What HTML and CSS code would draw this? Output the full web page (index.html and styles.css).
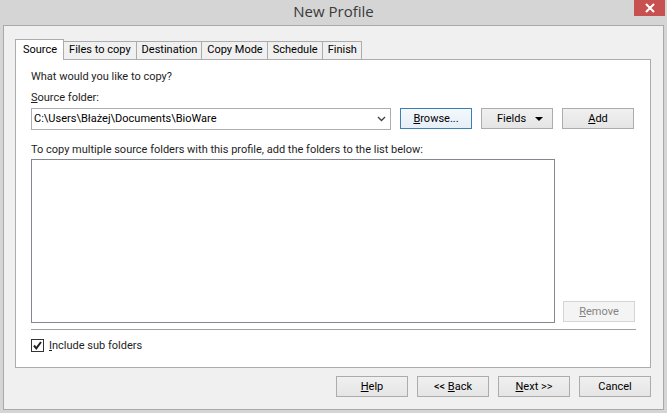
FILE: index.html
```html
<!DOCTYPE html>
<html lang="en">
<head>
    <meta charset="UTF-8">
    <title>New Profile</title>
    <link rel="stylesheet" href="styles.css">
</head>
<body>
    <div class="window">
        <div class="titlebar">
            <span class="title">New Profile</span>
            <div class="close">
                <svg width="12" height="10" viewBox="0 0 12 10"><path d="M2 1 L10 9 M10 1 L2 9" stroke="#fff" stroke-width="2"/></svg>
            </div>
        </div>

        <div class="client">
            <div class="tabs">
                <div class="tab active">Source</div>
                <div class="tab">Files to copy</div>
                <div class="tab">Destination</div>
                <div class="tab">Copy Mode</div>
                <div class="tab">Schedule</div>
                <div class="tab">Finish</div>
            </div>

            <div class="panel">
                <p class="question">What would you like to copy?</p>
                <p class="label"><u>S</u>ource folder:</p>

                <div class="source-row">
                    <div class="combo">
                        <span>C:\Users\Błażej\Documents\BioWare</span>
                        <svg class="chevron" width="9" height="6" viewBox="0 0 9 6"><path d="M1 1 L4.5 4.5 L8 1" fill="none" stroke="#444" stroke-width="1.4"/></svg>
                    </div>
                    <button class="btn default"><u>B</u>rowse...</button>
                    <button class="btn fields">Fields <span class="caret"></span></button>
                    <button class="btn"><u>A</u>dd</button>
                </div>

                <p class="label hint">To copy multiple source folders with this profile, add the folders to the list below:</p>

                <div class="list-row">
                    <div class="listbox"></div>
                    <button class="btn disabled"><u>R</u>emove</button>
                </div>

                <div class="separator"></div>

                <label class="check">
                    <span class="box">
                        <svg width="11" height="11" viewBox="0 0 11 11"><path d="M2 5.5 L4.3 8.3 L9 2" fill="none" stroke="#222" stroke-width="2"/></svg>
                    </span>
                    <span><u>I</u>nclude sub folders</span>
                </label>
            </div>

            <div class="footer">
                <button class="btn"><u>H</u>elp</button>
                <button class="btn">&lt;&lt; <u>B</u>ack</button>
                <button class="btn"><u>N</u>ext &gt;&gt;</button>
                <button class="btn">Cancel</button>
            </div>
        </div>
    </div>
</body>
</html>
```

FILE: styles.css
```css
* {
    margin: 0;
    padding: 0;
    box-sizing: border-box;
}

body {
    width: 667px;
    height: 413px;
    background: #d5d5d5;
    font-family: Roboto, "Open Sans", sans-serif;
    font-size: 11px;
    color: #000;
    overflow: hidden;
}

.window {
    display: flex;
    flex-direction: column;
    height: 413px;
}

.titlebar {
    height: 25px;
    position: relative;
    display: flex;
    justify-content: center;
    align-items: center;
}

.title {
    font-family: "Open Sans", sans-serif;
    font-size: 15px;
    color: #3a3a3a;
    margin-top: -2px;
}

.close {
    position: absolute;
    top: 0;
    right: 2px;
    width: 31px;
    height: 16px;
    background: #c75050;
    display: flex;
    justify-content: center;
    align-items: center;
}

.client {
    margin: 0 3px 3px 3px;
    height: 388px;
    border: 1px solid #a9a9a9;
    background: #f0f0f0;
    padding: 13px 12px 0 11px;
}

.tabs {
    display: flex;
    align-items: flex-end;
    height: 20px;
    position: relative;
    z-index: 1;
}

.tab {
    height: 18px;
    padding: 0 4px 0 5px;
    border: 1px solid #acacac;
    border-bottom: none;
    border-left: none;
    background: #f0f0f0;
    line-height: 16px;
}

.tab.active {
    height: 21px;
    margin-bottom: -1px;
    padding: 0 6px 0 7px;
    border-left: 1px solid #acacac;
    background: #fff;
    line-height: 19px;
}

.tab.active + .tab {
    padding: 0 5px;
}

.panel {
    height: 309px;
    background: #fff;
    border: 1px solid #acacac;
    padding: 9px 15px 0 15px;
}

.question {
    line-height: 16px;
    color: #1e1e1e;
}

.label {
    margin-top: 5px;
    line-height: 16px;
    color: #1e1e1e;
}

.source-row {
    display: flex;
    align-items: center;
    gap: 9px;
    margin-top: 2px;
}

.combo {
    width: 360px;
    height: 22px;
    border: 1px solid #abadb3;
    background: #fff;
    display: flex;
    align-items: center;
    justify-content: space-between;
    padding: 0 4px 0 2px;
    color: #000;
}

.chevron {
    margin-top: 1px;
}

.btn {
    width: 72px;
    height: 21px;
    border: 1px solid #acacac;
    background: linear-gradient(#f0f0f0, #e5e5e5);
    font-family: inherit;
    font-size: 11px;
    color: #000;
    line-height: 17px;
}

.btn.default {
    border-color: #3c7fb1;
    background: linear-gradient(#f4f8fc, #e6eef6);
}

.fields {
    display: flex;
    align-items: center;
    justify-content: center;
    gap: 9px;
    padding-left: 6px;
}

.caret {
    width: 0;
    height: 0;
    border-left: 4px solid transparent;
    border-right: 4px solid transparent;
    border-top: 4px solid #000;
}

.hint {
    margin-top: 12px;
}

.list-row {
    display: flex;
    align-items: flex-end;
    gap: 8px;
    margin-top: 1px;
}

.listbox {
    width: 524px;
    height: 164px;
    border: 1px solid #828790;
    background: #fff;
}

.btn.disabled {
    border-color: #d5d5d5;
    background: #f4f4f4;
    color: #838383;
    margin-bottom: 1px;
}

.separator {
    width: 605px;
    height: 1px;
    background: #a0a0a0;
    margin-top: 6px;
}

.check {
    display: flex;
    align-items: center;
    gap: 5px;
    margin-top: 9px;
    color: #1e1e1e;
}

.box {
    width: 13px;
    height: 13px;
    border: 1px solid #333;
    background: #fff;
    display: flex;
    justify-content: center;
    align-items: center;
}

.footer {
    display: flex;
    justify-content: flex-end;
    gap: 9px;
    margin-top: 8px;
}
```
